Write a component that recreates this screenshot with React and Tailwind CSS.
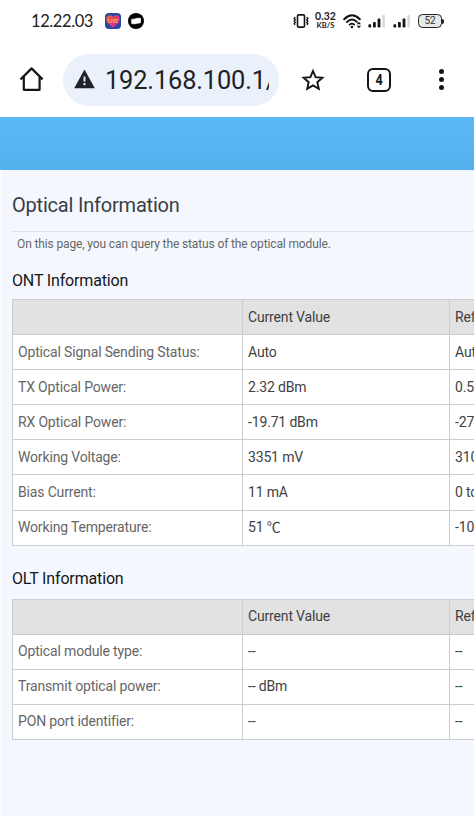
const ontRows = [
  { label: 'Optical Signal Sending Status:', value: 'Auto', reference: 'Auto' },
  { label: 'TX Optical Power:', value: '2.32 dBm', reference: '0.5 to 5 dBm' },
  { label: 'RX Optical Power:', value: '-19.71 dBm', reference: '-27 to -8 dBm' },
  { label: 'Working Voltage:', value: '3351 mV', reference: '3100 to 3500 mV' },
  { label: 'Bias Current:', value: '11 mA', reference: '0 to 90 mA' },
  { label: 'Working Temperature:', value: '51 ℃', reference: '-10 to +85 ℃' },
];

const oltRows = [
  { label: 'Optical module type:', value: '--', reference: '--' },
  { label: 'Transmit optical power:', value: '-- dBm', reference: '--' },
  { label: 'PON port identifier:', value: '--', reference: '--' },
];

function SignalIcon() {
  return (
    <svg width="18" height="14" viewBox="0 0 18 14" fill="#151515">
      <rect x="0.4" y="10.3" width="2.8" height="3.2" rx="0.8" />
      <rect x="5" y="8" width="2.8" height="5.5" rx="0.8" />
      <rect x="9.6" y="4.6" width="2.8" height="8.9" rx="0.8" />
      <rect x="14.4" y="0.8" width="2.4" height="12.7" rx="0.8" fill="#d6d6d6" />
    </svg>
  );
}

function StatusBar() {
  return (
    <div className="flex h-[42px] items-center pl-[31px] text-[#1c1c1c]">
      <span className="w-[63px] font-[Lato] text-[16.5px] leading-none tracking-[-0.4px] whitespace-nowrap">12.22.03</span>
      <svg className="ml-[11px]" width="16" height="16" viewBox="0 0 16 16">
        <defs>
          <linearGradient id="heart" x1="0" y1="0" x2="1" y2="1">
            <stop offset="0" stopColor="#f0702f" />
            <stop offset="0.5" stopColor="#e8366a" />
            <stop offset="1" stopColor="#b02ac0" />
          </linearGradient>
        </defs>
        <rect width="16" height="16" rx="4" fill="#2747a6" />
        <path d="M8 15 L2.4 9.6 C-0.2 6.5 1.4 2.2 4.8 2.2 C6.4 2.2 7.4 3 8 4 C8.6 3 9.6 2.2 11.2 2.2 C14.6 2.2 16.2 6.5 13.6 9.6 Z" fill="url(#heart)" />
        <text x="8" y="9.8" textAnchor="middle" fontFamily="Roboto" fontSize="5" fontWeight="700" fill="#f6b45f">LIVE</text>
      </svg>
      <svg className="ml-[7px]" width="16" height="16" viewBox="0 0 16 16">
        <circle cx="8" cy="8" r="8" fill="#000" />
        <path d="M3.7 6.2 Q6 6.6 7.6 5.7 Q9.5 4.8 12.6 5.4 L12.2 10 Q10 9.7 8.4 10.4 Q6.5 11.2 3.7 10.6 Z" fill="#fff" stroke="#fff" strokeWidth="0.8" strokeLinejoin="round" />
      </svg>

      {/* vibrate */}
      <svg className="ml-[149px]" width="16" height="14" viewBox="0 0 16 14" fill="none" stroke="#151515">
        <rect x="4.5" y="0.9" width="7" height="12.2" rx="1.2" strokeWidth="1.6" />
        <path d="M2.2 3.2 L1.2 4.5 L2.2 5.8 L1.2 7.1 L2.2 8.4 L1.2 9.7 L2 10.8 M13.8 3.2 L14.8 4.5 L13.8 5.8 L14.8 7.1 L13.8 8.4 L14.8 9.7 L14 10.8" strokeWidth="1.4" />
      </svg>
      <div className="ml-[6px] flex w-[21px] flex-col items-center font-[Lato] whitespace-nowrap">
        <span className="text-[10.5px] leading-[9px] font-bold">0.32</span>
        <span className="text-[7.6px] leading-[9px] font-bold">KB/S</span>
      </div>
      <svg className="ml-[7px]" width="19" height="15" viewBox="0 0 19 15" fill="none" stroke="#151515" strokeLinecap="round">
        <path d="M1.2 5.2 Q9 -2.6 16.8 5.2" strokeWidth="2" />
        <path d="M3.9 8 Q9 3.2 13.8 7.8" strokeWidth="2" />
        <path d="M6.6 10.6 Q9 8.6 11.2 10.6" strokeWidth="1.8" />
        <circle cx="8.9" cy="13" r="1.3" fill="#151515" stroke="none" />
        <path d="M15.9 7.8 L18.1 10.2 H13.7 Z M15.9 14.2 L18.1 11.8 H13.7 Z" fill="#151515" stroke="none" />
      </svg>
      <span className="ml-[6px]"><SignalIcon /></span>
      <span className="ml-[7px]"><SignalIcon /></span>
      <div className="ml-[7px] flex items-center">
        <div className="flex h-[14px] w-[24px] items-center justify-center rounded-[4.5px] border-[1.5px] border-[#222] bg-[#e8e8e8] font-[Roboto] text-[10px] leading-none text-[#333]">52</div>
        <div className="h-[5px] w-[2px] rounded-r-sm bg-[#222]" />
      </div>
    </div>
  );
}

function Toolbar() {
  return (
    <div className="flex h-[75px] items-center pl-[19px]">
      <svg className="relative -top-px" width="26" height="26" viewBox="0 0 26 26" fill="none" stroke="#151515" strokeWidth="2.2" strokeLinejoin="round">
        <path d="M1.6 13.4 L12.6 2.4 L23.6 13.4 M4.8 11 V23.8 H20.6 V11" />
      </svg>
      <div className="ml-[18px] flex h-[52px] w-[216px] items-center rounded-full bg-[#ebf1fb] pl-[11px]">
        <svg className="relative -top-px" width="21" height="20" viewBox="0 0 21 20">
          <path d="M10.5 0.6 L20.8 19.2 H0.2 Z" fill="#1f2226" />
          <path d="M10.5 7.4 V12.4 M10.5 14 V16.2" stroke="#ebf1fb" strokeWidth="1.9" />
        </svg>
        <div className="ml-[10px] w-[164px] overflow-hidden font-[Roboto] text-[25.4px] leading-[34px] tracking-[-0.15px] whitespace-nowrap text-[#1f2226]">192.168.100.1/</div>
      </div>
      <svg className="ml-[22px]" width="24" height="24" viewBox="0 0 24 24" fill="none" stroke="#151515" strokeWidth="1.9">
        <path d="M12 3 L14.6 9.2 L21.4 9.8 L16.3 14.2 L17.8 20.9 L12 17.4 L6.2 20.9 L7.7 14.2 L2.6 9.8 L9.4 9.2 Z" />
      </svg>
      <div className="ml-[42px] flex h-[24px] w-[24px] items-center justify-center rounded-[6px] border-2 border-[#151515] font-[Roboto] text-[14px] leading-none font-bold text-[#151515]"><span className="scale-x-90">4</span></div>
      <div className="ml-[48px] flex flex-col gap-[3px]">
        <span className="h-[5px] w-[5px] rounded-full bg-[#151515]" />
        <span className="h-[5px] w-[5px] rounded-full bg-[#151515]" />
        <span className="h-[5px] w-[5px] rounded-full bg-[#151515]" />
      </div>
    </div>
  );
}

function InfoTable({ rows }) {
  return (
    <div className="w-[645px] border-t border-l border-[#cbcdd0] text-[14px] leading-[20px] tracking-[-0.16px] text-[#3f3f3f]">
      <div className="grid h-[35.1px] grid-cols-[230px_207px_207px] bg-[#e2e2e2]">
        <div className="border-r border-b border-[#cbcdd0]" />
        <div className="flex items-center border-r border-b border-[#cbcdd0] pb-px pl-[5px]">Current Value</div>
        <div className="flex items-center border-b border-[#cbcdd0] pb-px pl-[5px]">Reference Value</div>
      </div>
      {rows.map(row => (
        <div key={row.label} className="grid h-[35.1px] grid-cols-[230px_207px_207px] bg-white whitespace-nowrap">
          <div className="flex items-center border-r border-b border-[#cbcdd0] pb-px pl-[5px] text-[#666]">{row.label}</div>
          <div className="flex items-center border-r border-b border-[#cbcdd0] pb-px pl-[5px]">{row.value}</div>
          <div className="flex items-center border-b border-[#cbcdd0] pb-px pl-[5px]">{row.reference}</div>
        </div>
      ))}
    </div>
  );
}

export default function App() {
  return (
    <div className="h-[818px] w-[474px] overflow-hidden bg-white">
      <StatusBar />
      <Toolbar />
      <div className="h-[53px] bg-linear-to-b from-[#5cb8f8] to-[#54b0ec]" />

      {/* Page */}
      <main className="h-[646px] overflow-hidden border-l-2 border-[#f9fbfe] bg-[#f4f8fe] pl-[10px] font-[Roboto,'Noto_Sans_CJK_SC',sans-serif]">
        <h1 className="flex h-[62px] items-center border-b border-[#e0e4e8] pt-[8px] text-[20px] tracking-[-0.2px] text-[#3a3d42]">Optical Information</h1>
        <p className="flex h-[24px] items-center pl-[5px] text-[12px] tracking-[-0.13px] text-[#666]">On this page, you can query the status of the optical module.</p>
        <h2 className="flex h-[43px] items-center pt-[6px] text-[16px] tracking-[-0.15px] text-[#15171a]">ONT Information</h2>
        <InfoTable rows={ontRows} />
        <h2 className="flex h-[53px] items-center pt-[14px] text-[16px] tracking-[-0.15px] text-[#15171a]">OLT Information</h2>
        <InfoTable rows={oltRows} />
      </main>
    </div>
  );
}
